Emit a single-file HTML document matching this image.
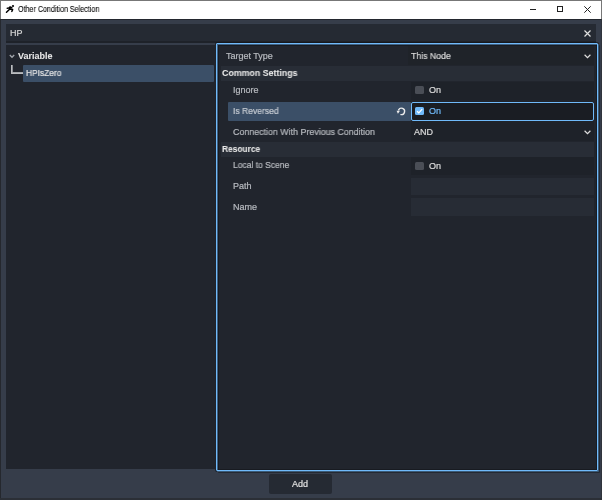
<!DOCTYPE html>
<html><head><meta charset="utf-8">
<style>
*{margin:0;padding:0;box-sizing:border-box}
html,body{width:602px;height:500px;overflow:hidden;background:#363d4a;font-family:"Liberation Sans",sans-serif;-webkit-font-smoothing:antialiased}
.t{will-change:transform;-webkit-text-stroke:0.2px currentColor}
.a{position:absolute}
.t{position:absolute;white-space:nowrap;font-size:9px;line-height:10px;color:#b8bbc0}
.b{font-weight:bold;color:#e8e8e8;-webkit-text-stroke:0.05px currentColor}
</style></head><body>
<!-- window frame -->
<div class="a" style="left:0;top:0;width:602px;height:1px;background:#777"></div><div class="a" style="left:0;top:0;width:1px;height:19px;background:#777"></div><div class="a" style="left:601px;top:0;width:1px;height:19px;background:#777"></div><div class="a" style="left:0;top:19px;width:1px;height:481px;background:#25282e"></div><div class="a" style="left:601px;top:19px;width:1px;height:481px;background:#30343b"></div><div class="a" style="left:0;top:498px;width:602px;height:2px;background:#2b2f36"></div>
<!-- title bar -->
<div class="a" style="left:1px;top:1px;width:600px;height:18px;background:#fff"></div>
<div class="a" style="left:1px;top:19px;width:600px;height:1px;background:#23272e"></div>
<svg class="a" style="left:0;top:0" width="20" height="20" viewBox="0 0 20 20"><circle cx="13" cy="6" r="1.1" fill="#000"/><path d="M7.3 8.3L8.8 8.1 10.2 6.9 11.8 7.6M10.4 7.3L9.6 9.3 6.5 12.2M9.8 9L12.6 9.6 11.8 11.4" stroke="#000" stroke-width="1.5" fill="none" stroke-linecap="round" stroke-linejoin="round"/></svg>
<div class="t" style="left:18px;top:4px;font-size:8.6px;color:#000;-webkit-text-stroke:0.1px #000;transform:scaleX(0.83);transform-origin:0 0">Other Condition Selection</div>
<!-- min max close -->
<div class="a" style="left:530px;top:9px;width:6px;height:1px;background:#222"></div>
<div class="a" style="left:557px;top:6px;width:6px;height:6px;border:1px solid #222"></div>
<svg class="a" style="left:584px;top:6px" width="7" height="7" viewBox="0 0 7 7"><path d="M0.3 0.3L6.7 6.7M6.7 0.3L0.3 6.7" stroke="#222" stroke-width="1"/></svg>

<!-- HP line edit -->
<div class="a" style="left:6px;top:24px;width:590px;height:19px;background:#252a33;border-bottom:2px solid #1e2229"></div>
<div class="t" style="left:10px;top:28px;color:#d6d6d6">HP</div>
<svg class="a" style="left:584px;top:29.5px" width="7" height="7" viewBox="0 0 7 7"><path d="M0.5 0.5L6.5 6.5M6.5 0.5L0.5 6.5" stroke="#e0e0e0" stroke-width="1.2"/></svg>

<!-- tree panel -->
<div class="a" style="left:6px;top:45px;width:209px;height:424px;background:#21252d"></div>
<svg class="a" style="left:9px;top:54px" width="6" height="5" viewBox="0 0 6 5"><path d="M0.8 1L3 3.3 5.2 1" stroke="#a0a4aa" stroke-width="1.3" fill="none"/></svg>
<div class="t b" style="left:18px;top:51px">Variable</div>
<div class="a" style="left:11px;top:65px;width:1px;height:9px;background:#babcbf"></div><div class="a" style="left:12px;top:65px;width:1px;height:8px;background:#8a8d92"></div>
<div class="a" style="left:12px;top:72px;width:11px;height:1px;background:#a4a7ab"></div><div class="a" style="left:11px;top:73px;width:12px;height:1px;background:#babcbf"></div>
<div class="a" style="left:23px;top:65px;width:191px;height:17px;background:#3b4f67;border-radius:1px"></div>
<div class="t" style="left:25.5px;top:68px;color:#e6e6e6;transform:scaleX(0.93);transform-origin:0 0">HPIsZero</div>

<!-- inspector -->
<div class="a" style="left:216px;top:43px;width:382px;height:428px;border:1px solid #70bafa;border-radius:1px;background:#21252d;box-shadow:1px 1px 0 0 rgba(112,186,250,.4),0 0 0 1px rgba(16,18,22,.6),2px 2px 0 0 rgba(16,18,22,.45),inset 1px 1px 0 0 rgba(112,186,250,.45),inset 2px 2px 0 0 rgba(16,18,22,.5),inset -1px -1px 0 0 rgba(16,18,22,.5)"></div>
<!-- Target type row -->
<div class="t" style="left:226px;top:51px;color:#b8bbc0">Target Type</div>
<div class="a" style="left:408px;top:46px;width:186px;height:19px;background:#1f2329"></div>
<div class="t" style="left:411px;top:51px;color:#dcdcdc;transform:scaleX(0.97);transform-origin:0 0">This Node</div>
<svg class="a" style="left:584px;top:54px" width="7" height="5" viewBox="0 0 7 5"><path d="M0.6 0.8L3.5 3.6 6.4 0.8" stroke="#e0e0e0" stroke-width="1.2" fill="none"/></svg>
<!-- Common settings -->
<div class="a" style="left:221px;top:66px;width:373px;height:15px;background:#282d36"></div>
<div class="t b" style="left:222px;top:68px;transform:scaleX(0.98);transform-origin:0 0">Common Settings</div>
<!-- Ignore -->
<div class="t" style="left:233px;top:85px">Ignore</div>
<div class="a" style="left:411px;top:82px;width:183px;height:18px;background:#1e2229"></div>
<div class="a" style="left:415px;top:86px;width:9px;height:8px;background:#4a4e56;border-radius:1.5px"></div>
<div class="t" style="left:429px;top:85px;color:#dcdcdc">On</div>
<!-- Is Reversed -->
<div class="a" style="left:228px;top:102px;width:183px;height:19px;background:#3b4f67;border-radius:1px"></div>
<div class="t" style="left:233px;top:106px;color:#c8cdd4;transform:scaleX(0.95);transform-origin:0 0">Is Reversed</div>
<svg class="a" style="left:393px;top:102px" width="17" height="19" viewBox="0 0 17 19"><path d="M5.6 7.9A3.2 3.2 0 1 1 7.9 12.6" stroke="#ececec" stroke-width="1.35" fill="none" stroke-linecap="round"/><path d="M3.6 8.7L7 8.7 4.9 11.7z" fill="#ececec"/></svg>
<div class="a" style="left:411px;top:102px;width:183px;height:19px;background:#1a1d23;border:1px solid #70bafa;border-radius:2px"></div>
<div class="a" style="left:415px;top:107px;width:9px;height:8px;background:#70bafa;border-radius:1.5px"></div>
<svg class="a" style="left:415px;top:107px" width="9" height="8" viewBox="0 0 9 8"><path d="M2 4.2L3.8 5.8 7.2 2.2" stroke="#fff" stroke-width="1.2" fill="none"/></svg>
<div class="t" style="left:429px;top:106px;color:#70bafa">On</div>
<!-- Connection -->
<div class="t" style="left:233px;top:127px;transform:scaleX(0.985);transform-origin:0 0">Connection With Previous Condition</div>
<div class="a" style="left:411px;top:121px;width:183px;height:20px;background:#1e2229"></div>
<div class="t" style="left:414px;top:127px;color:#dcdcdc">AND</div>
<svg class="a" style="left:584px;top:130px" width="7" height="5" viewBox="0 0 7 5"><path d="M0.6 0.8L3.5 3.6 6.4 0.8" stroke="#e0e0e0" stroke-width="1.2" fill="none"/></svg>
<!-- Resource -->
<div class="a" style="left:221px;top:142px;width:373px;height:15px;background:#282d36"></div>
<div class="t b" style="left:222px;top:144px;transform:scaleX(0.93);transform-origin:0 0">Resource</div>
<div class="t" style="left:233px;top:160px;transform:scaleX(0.945);transform-origin:0 0">Local to Scene</div>
<div class="a" style="left:411px;top:157px;width:183px;height:18px;background:#1e2229"></div>
<div class="a" style="left:415px;top:162px;width:9px;height:8px;background:#4a4e56;border-radius:1.5px"></div>
<div class="t" style="left:429px;top:161px;color:#dcdcdc">On</div>
<div class="t" style="left:233px;top:181px">Path</div>
<div class="a" style="left:411px;top:178px;width:183px;height:17px;background:#272c35"></div>
<div class="t" style="left:233px;top:202px">Name</div>
<div class="a" style="left:411px;top:198px;width:183px;height:18px;background:#272c35"></div>

<!-- add button -->
<div class="a" style="left:269px;top:474px;width:63px;height:20px;background:#252a33;border-radius:2px"></div>
<div class="t" style="left:292px;top:479px;color:#e0e0e0">Add</div>
</body></html>
